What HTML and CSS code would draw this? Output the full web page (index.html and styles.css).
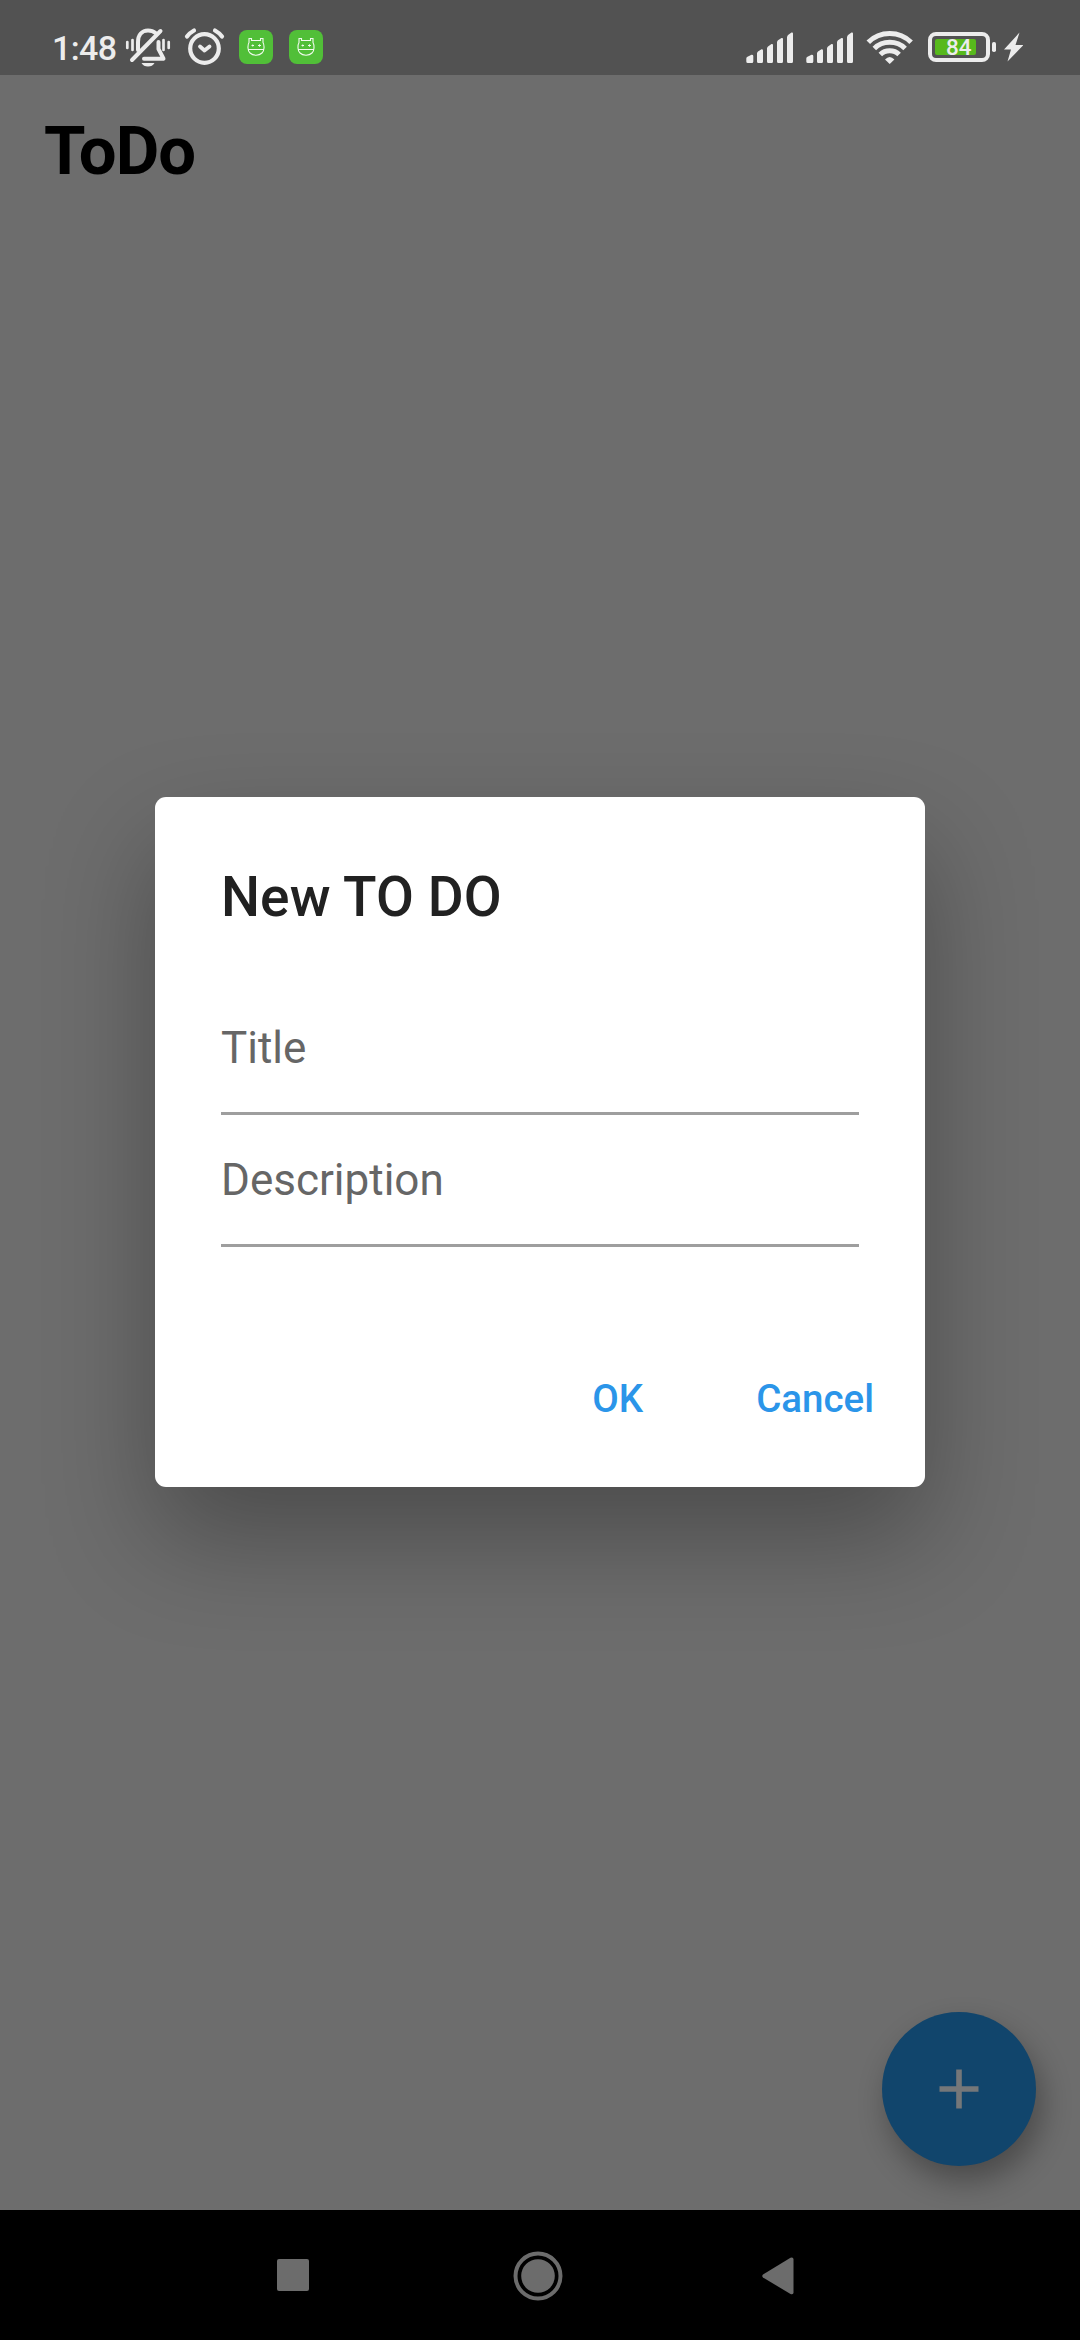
FILE: index.html
```
<!DOCTYPE html>
<html lang="en">
<head>
<meta charset="utf-8">
<title>ToDo</title>
<link rel="stylesheet" href="styles.css">
</head>
<body>
<div class="screen">
  <header class="status">
    <span class="clock">1:48</span>
    <svg class="bell" width="46" height="75" viewBox="125 0 46 75" fill="none" stroke="#ececec" stroke-linecap="round" stroke-linejoin="round">
      <path d="M138 50V42C138 35 142 30.500 148 30.500C151 30.500 153.500 31.300 155.500 33" stroke-width="4"/>
      <path d="M158.500 42V49L163.500 58.700H144" stroke-width="4"/>
      <path d="M160.500 31L132 60" stroke-width="4"/>
      <path d="M141.500 63H154.500Q152.500 66.500 148 66.500T141.500 63Z" fill="#ececec" stroke="none"/>
      <path d="M127.300 42V48M132.500 40V50M163.500 40V50M168.700 42V48" stroke-width="2.700"/>
    </svg>
    <svg class="alarm" width="42" height="75" viewBox="184 0 42 75" fill="none" stroke="#ececec" stroke-linecap="round" stroke-linejoin="round">
      <circle cx="204.500" cy="48.500" r="14.300" stroke-width="4.200"/>
      <path d="M200 46.500L204.500 50.500L209.500 46.500" stroke-width="3.800"/>
      <path d="M187 36.500Q189.500 33 194 30.500M222 36.500Q219.500 33 215 30.500" stroke-width="4.200"/>
    </svg>
    <svg class="app" width="34" height="75" viewBox="0 0 34 75">
      <rect y="30" width="34" height="34" rx="8" fill="#51bf38"/>
      <path d="M10 42.500V38.500H12.500V40.500H21.500V38.500H24V42.500C25.500 45 25.500 51 23 53C20 56 14 56 11 53C8.500 51 8.500 45 10 42.500ZM9 49.500H25" fill="none" stroke="#f2fbef" stroke-width="1.100"/>
      <path d="M12.500 45.500H15M19 45.500H22M13.700 44.500V46.500M20.500 44.300V46.700" stroke="#f2fbef" stroke-width="1"/>
    </svg>
    <svg class="app" width="34" height="75" viewBox="0 0 34 75">
      <rect y="30" width="34" height="34" rx="8" fill="#51bf38"/>
      <path d="M10 42.500V38.500H12.500V40.500H21.500V38.500H24V42.500C25.500 45 25.500 51 23 53C20 56 14 56 11 53C8.500 51 8.500 45 10 42.500ZM9 49.500H25" fill="none" stroke="#f2fbef" stroke-width="1.100"/>
      <path d="M12.500 45.500H15M19 45.500H22M13.700 44.500V46.500M20.500 44.300V46.700" stroke="#f2fbef" stroke-width="1"/>
    </svg>
    <span class="spacer"></span>
    <svg class="signal" width="48" height="75" viewBox="0 0 48 75" fill="#ececec">
      <path d="M.300 58.500Q.300 57.500 1 57L5.500 54.700Q7.300 54.500 7.300 56V61.500Q7.300 63 5.800 63H1.800Q.300 63 .300 61.500ZM11 53.500Q11 52.500 12 51.500L15.500 49.200Q17 49 17 50.500V61.500Q17 63 15.500 63H12.500Q11 63 11 61.500ZM21 48.500Q21 47.500 22 46.500L25.500 44Q27 43.500 27 45V61.500Q27 63 25.500 63H22.500Q21 63 21 61.500ZM31 42.500Q31 41 32 40.300L35.500 38Q37 37.500 37 39V61.500Q37 63 35.500 63H32.500Q31 63 31 61.500ZM41 37.500Q41 36 42 35L45.500 32.500Q47 32 47 33.500V61.500Q47 63 45.500 63H42.500Q41 63 41 61.500Z"/>
    </svg>
    <svg class="signal" width="48" height="75" viewBox="0 0 48 75" fill="#ececec">
      <path d="M.300 58.500Q.300 57.500 1 57L5.500 54.700Q7.300 54.500 7.300 56V61.500Q7.300 63 5.800 63H1.800Q.300 63 .300 61.500ZM11 53.500Q11 52.500 12 51.500L15.500 49.200Q17 49 17 50.500V61.500Q17 63 15.500 63H12.500Q11 63 11 61.500ZM21 48.500Q21 47.500 22 46.500L25.500 44Q27 43.500 27 45V61.500Q27 63 25.500 63H22.500Q21 63 21 61.500ZM31 42.500Q31 41 32 40.300L35.500 38Q37 37.500 37 39V61.500Q37 63 35.500 63H32.500Q31 63 31 61.500ZM41 37.500Q41 36 42 35L45.500 32.500Q47 32 47 33.500V61.500Q47 63 45.500 63H42.500Q41 63 41 61.500Z"/>
    </svg>
    <svg class="wifi" width="48" height="75" viewBox="865 0 48 75" fill="none" stroke="#ececec" stroke-width="5">
      <path d="M867.300 42.300Q876 33.500 888.700 33.500T910.100 42.300"/>
      <path d="M873.300 48.500Q879.500 42.300 888.700 42.300T904.100 48.500"/>
      <path d="M879.300 54.500Q883 50.800 888.700 50.800T898.100 54.500"/>
      <path d="M884 59.500Q888.700 54.500 893.400 59.500L888.700 64Z" fill="#ececec" stroke="none"/>
    </svg>
    <div class="battery"><div class="level"></div><span class="percent">84</span></div>
    <svg class="charge" width="32" height="75" viewBox="990 0 32 75" fill="#ececec">
      <rect x="991" y="42" width="4" height="10" rx="1.800"/>
      <path d="M1018.500 32.500L1003 49.500H1010L1006.500 61.500L1022.500 45H1014.500Z"/>
    </svg>
  </header>

  <main class="page">
    <h1 class="heading">ToDo</h1>
    <button class="fab" aria-label="Add">
      <svg width="40" height="40" viewBox="0 0 40 40"><path d="M20 .500V39.500M.500 20H39.500" stroke="#757779" stroke-width="5.600"/></svg>
    </button>
  </main>

  <nav class="navbar">
    <svg width="32" height="32" viewBox="0 0 32 32" fill="#6c6c6c"><rect width="32" height="32" rx="2"/></svg>
    <svg class="home" width="50" height="50" viewBox="0 0 50 50" fill="#6c6c6c"><circle cx="25" cy="25" r="22.500" fill="none" stroke="#6c6c6c" stroke-width="4"/><circle cx="25" cy="25" r="16.800"/></svg>
    <svg class="back" width="32" height="38" viewBox="0 0 32 38" fill="#6c6c6c"><path d="M1 17.500L28.500 .800Q31.500 0 31.500 2.500V35.500Q31.500 38 28.500 37L1 20.500Q-.500 19 1 17.500Z"/></svg>
  </nav>

  <section class="dialog" role="dialog">
    <h2 class="title">New TO DO</h2>
    <div class="field">Title</div>
    <div class="field">Description</div>
    <div class="actions"><span>OK</span><span>Cancel</span></div>
  </section>
</div>
</body>
</html>
```
FILE: styles.css
```
* { box-sizing: border-box; }

body {
  margin: 0;
  font-family: Roboto, sans-serif;
}

.screen {
  position: relative;
  display: flex;
  flex-direction: column;
  width: 1080px;
  height: 2340px;
  overflow: hidden;
  background: #6d6d6d;
}

svg { display: block; flex: none; }

/* Status bar */
.status {
  display: flex;
  align-items: center;
  height: 75px;
  flex: none;
  padding: 0 57px 0 52px;
  background: #525252;
  color: #ececec;
}
.clock {
  width: 73px;
  padding-top: 20px;
  font-size: 34px;
  line-height: 40px;
  font-weight: 500;
  letter-spacing: -.600px;
  white-space: nowrap;
}
.alarm { margin-left: 13px; }
.app { margin-left: 13px; }
.app + .app { margin-left: 16px; }
.spacer { flex: 1; }
.signal + .signal { margin-left: 12px; }
.wifi { margin-left: 12px; }
.battery {
  position: relative;
  display: flex;
  align-items: center;
  width: 62px;
  height: 30px;
  margin: 19px 1px 0 14px;
  padding-left: 3px;
  border: 4px solid #ececec;
  border-radius: 8px;
}
.level {
  width: 41px;
  height: 16px;
  border-radius: 2px;
  background: #57b91c;
}
.percent {
  position: absolute;
  left: 14px;
  top: 0;
  font-size: 22.500px;
  line-height: 23px;
  font-weight: 500;
}

/* Page */
.page {
  display: flex;
  flex: 1;
  flex-direction: column;
  justify-content: space-between;
  padding: 36px 44px 44px;
}
.heading {
  margin: 0;
  font-size: 67px;
  line-height: 80px;
  font-weight: 700;
  letter-spacing: -1px;
  color: #000;
}
.fab {
  display: flex;
  align-items: center;
  justify-content: center;
  align-self: flex-end;
  width: 154px;
  height: 154px;
  padding: 0;
  border: 0;
  border-radius: 50%;
  background: #11456c;
  box-shadow: 6px 15px 30px rgba(0, 0, 0, .32);
}

/* System navigation */
.navbar {
  display: flex;
  align-items: center;
  flex: none;
  height: 130px;
  padding-left: 277px;
  background: #000;
}
.home { margin-left: 203.500px; margin-top: 1px; }
.back { margin-left: 199px; margin-top: 1px; }

/* Dialog */
.dialog {
  position: absolute;
  left: 155px;
  top: 797.400px;
  width: 770px;
  height: 690px;
  padding: 66.600px 66px 0;
  border-radius: 11px;
  background: #fff;
  box-shadow: 0 50px 110px rgba(0, 0, 0, .31);
}
.title {
  margin: 0 0 53px;
  font-size: 55px;
  line-height: 66px;
  font-weight: 500;
  letter-spacing: .100px;
  color: #212121;
}
.field {
  height: 132px;
  padding-top: 39px;
  border-bottom: 3px solid #9e9e9e;
  font-size: 44px;
  line-height: 52px;
  color: #666;
}
.actions {
  display: flex;
  justify-content: flex-end;
  gap: 113px;
  margin: 129px -15px 0;
  font-size: 38.500px;
  line-height: 46px;
  font-weight: 500;
  color: #2b95e9;
}
```
